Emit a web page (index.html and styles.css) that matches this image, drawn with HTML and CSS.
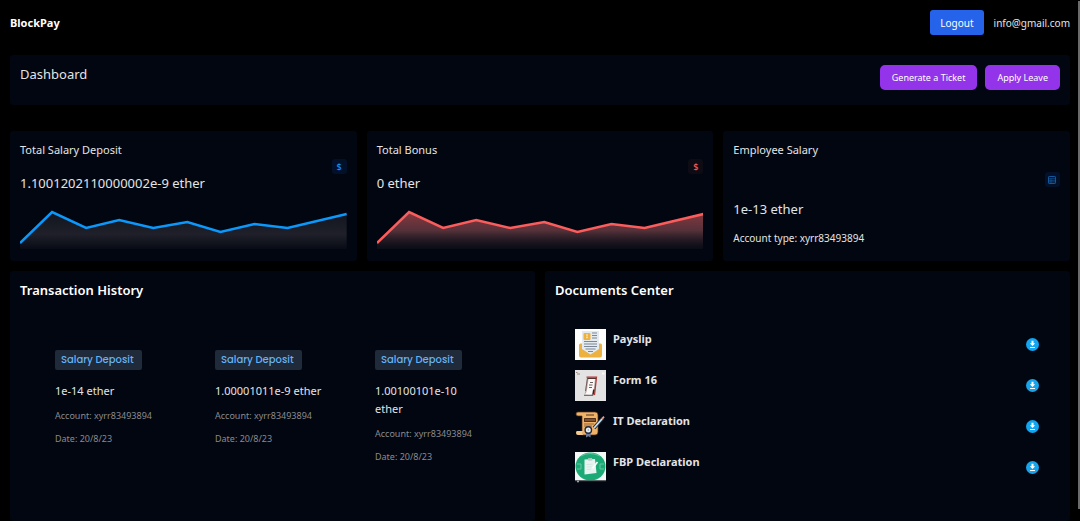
FILE: index.html
```html
<!DOCTYPE html>
<html lang="en">
<head>
  <meta charset="UTF-8">
  <meta name="viewport" content="width=device-width, initial-scale=1.0">
  <title>BlockPay</title>
  <link rel="stylesheet" href="styles.css">
</head>
<body>
  <div class="page">
    <header class="navbar">
      <h1 class="brand">BlockPay</h1>
      <div class="user">
        <button type="button" class="btn-logout">Logout</button>
        <span class="email">info@gmail.com</span>
      </div>
    </header>

    <section class="panel toolbar">
      <h2 class="toolbar-title">Dashboard</h2>
      <div class="actions">
        <button type="button" class="btn">Generate a Ticket</button>
        <button type="button" class="btn">Apply Leave</button>
      </div>
    </section>

    <section class="stats">
      <div class="panel stat">
        <h3 class="stat-title">Total Salary Deposit</h3>
        <span class="chip chip-blue">$</span>
        <p class="stat-value">1.1001202110000002e-9 ether</p>
        <svg class="chart chart-blue" viewBox="0 0 326 40" preserveAspectRatio="none">
          <defs>
            <linearGradient id="fillBlue" x1="0" y1="0" x2="0" y2="1">
              <stop offset="0" stop-color="#1b1c25" stop-opacity="0.7"/>
              <stop offset="0.6" stop-color="#1f2029"/>
              <stop offset="1" stop-color="#1f2029" stop-opacity="0.2"/>
            </linearGradient>
          </defs>
          <path fill="url(#fillBlue)" d="M0 34 32 3 66 19 99 11 133 19 167 13 200 23 234 15 267 19 326 5V40H0Z"/>
          <polyline class="chart-line" stroke-width="2.5" points="0,34 32,3 66,19 99,11 133,19 167,13 200,23 234,15 267,19 326,5"/>
        </svg>
      </div>

      <div class="panel stat">
        <h3 class="stat-title">Total Bonus</h3>
        <span class="chip chip-red">$</span>
        <p class="stat-value">0 ether</p>
        <svg class="chart chart-red" viewBox="0 0 326 40" preserveAspectRatio="none">
          <defs>
            <linearGradient id="fillRed" x1="0" y1="0" x2="0" y2="1">
              <stop offset="0" stop-color="#86383e"/>
              <stop offset="0.5" stop-color="#55313a"/>
              <stop offset="1" stop-color="#14151f" stop-opacity="0.4"/>
            </linearGradient>
          </defs>
          <path fill="url(#fillRed)" d="M0 34 32 3 66 19 99 11 133 19 167 13 200 23 234 15 267 19 326 5V40H0Z"/>
          <polyline class="chart-line" stroke-width="2.5" points="0,34 32,3 66,19 99,11 133,19 167,13 200,23 234,15 267,19 326,5"/>
        </svg>
      </div>

      <div class="panel stat stat-spaced">
        <h3 class="stat-title">Employee Salary</h3>
        <span class="chip chip-blue">
          <svg class="chip-icon" viewBox="0 0 8 8">
            <rect x="0.5" y="0.5" width="7" height="7" rx="0.6" fill="none" stroke="#11599c"/>
            <path d="M1 2.7h6M1 4.3h6M1 5.9h6M3 2.5v5" fill="none" stroke="#11599c" stroke-width="0.7"/>
          </svg>
        </span>
        <p class="stat-value">1e-13 ether</p>
        <p class="stat-note">Account type: xyrr83493894</p>
      </div>
    </section>

    <section class="details">
      <div class="panel">
        <h2 class="panel-title">Transaction History</h2>
        <div class="transactions">
          <div class="transaction">
            <span class="tag">Salary Deposit</span>
            <p class="amount">1e-14 ether</p>
            <p class="meta">Account: xyrr83493894</p>
            <p class="meta">Date: 20/8/23</p>
          </div>
          <div class="transaction">
            <span class="tag">Salary Deposit</span>
            <p class="amount">1.00001011e-9 ether</p>
            <p class="meta">Account: xyrr83493894</p>
            <p class="meta">Date: 20/8/23</p>
          </div>
          <div class="transaction">
            <span class="tag">Salary Deposit</span>
            <p class="amount">1.00100101e-10 ether</p>
            <p class="meta">Account: xyrr83493894</p>
            <p class="meta">Date: 20/8/23</p>
          </div>
        </div>
      </div>

      <div class="panel">
        <h2 class="panel-title">Documents Center</h2>
        <ul class="documents">
          <li class="document">
            <svg class="thumb" viewBox="0 0 31 31">
              <rect width="31" height="31" fill="#fdfdfb"/>
              <path d="M4 16q0-1.500 1.500-1.500H8V9h14v5.500h3.500Q27 14.500 27 16v10.500q0 2-2 2H6q-2 0-2-2Z" fill="#edb140"/>
              <path d="M7 2h17v18l-8.500 5.500L7 20Z" fill="#e3ebf1"/>
              <rect x="8.500" y="4" width="7" height="7" rx="1" fill="#edb140"/>
              <path d="M12 5v4.500M11 6h2M11 8.500h2" stroke="#fbe3b0" stroke-width="0.800"/>
              <path d="M17 4h5M17 6.500h5M17 9h5M9 12.500h13M9 15h13M9 17.500h13M10.500 20h10M13 22.500h5" stroke="#7b8794" stroke-width="1"/>
            </svg>
            <h3 class="doc-name">Payslip</h3>
            <button type="button" class="download" aria-label="Download Payslip">
              <svg viewBox="0 0 13 13"><circle cx="6.500" cy="6.500" r="6.500" fill="#14a5ee"/><path d="M5.500 2.800h2v2.500h1.700L6.500 8 3.800 5.300h1.700ZM4 9h5v1H4Z" fill="#fff"/></svg>
            </button>
          </li>
          <li class="document">
            <svg class="thumb" viewBox="0 0 31 31">
              <rect width="31" height="31" fill="#e3e3e4"/>
              <path d="M1 2.500h1.500M2 4h3" stroke="#9c8a80" stroke-width="1"/>
              <path d="M27 3.500h2.500" stroke="#f8f8f8" stroke-width="2"/>
              <path d="M12 7h9.500L19.500 25.500h-10Z" fill="#b9aaa6"/>
              <path d="M11.500 7.200h10L19.500 25" fill="none" stroke="#b03b36" stroke-width="1.300"/>
              <path d="M12.500 8.500h8.500" stroke="#543431" stroke-width="1"/>
              <path d="M12.500 8 10.500 21" stroke="#5f4a47" stroke-width="0.800"/>
              <path d="M13.500 9h6.500l-1.500 12q-.5 4-3.500 4l-5.500-.5q2-1 2.500-5Z" fill="#faf9f8"/>
              <path d="M9 25.300h9M15 12.500h3M14 15h3.500M14 17.500h3" stroke="#5a4b49" stroke-width="0.900"/>
              <path d="M18.800 19.500l-.8 5" stroke="#2b2627" stroke-width="1.500"/>
            </svg>
            <h3 class="doc-name">Form 16</h3>
            <button type="button" class="download" aria-label="Download Form 16">
              <svg viewBox="0 0 13 13"><circle cx="6.500" cy="6.500" r="6.500" fill="#14a5ee"/><path d="M5.500 2.800h2v2.500h1.700L6.500 8 3.800 5.300h1.700ZM4 9h5v1H4Z" fill="#fff"/></svg>
            </button>
          </li>
          <li class="document">
            <svg class="thumb" viewBox="0 0 31 31">
              <path d="M3 1h17q3 0 3 3v17q0 3-3 3H7V5H3Q1 5 1 3t2-2Z" fill="#f0b267" stroke="#51311f" stroke-width="0.700"/>
              <path d="M2 20h6q-1 2 0 4H3q-2 0-2-2t1-2Z" fill="#f6c98c"/>
              <path d="M11 4h8" stroke="#51311f" stroke-width="1"/>
              <rect x="9" y="7" width="12" height="4" rx="0.500" fill="#51311f"/>
              <path d="M10 9h10" stroke="#c38547" stroke-width="0.800"/>
              <path d="M9 13h10M9 15h8" stroke="#8b5933" stroke-width="0.900"/>
              <path d="M11 20v6.500l2.300-1.200 2.300 1.200V20Z" fill="#6d7896"/>
              <circle cx="13.300" cy="19" r="3.200" fill="#e9eef3" stroke="#252b3b" stroke-width="1.400"/>
              <circle cx="13.300" cy="19" r="0.800" fill="#8d97a8"/>
              <path d="M19 17 28 7" stroke="#252b3b" stroke-width="3.400"/>
              <path d="M19 17 27 8" stroke="#c5e1f2" stroke-width="1.800"/>
              <path d="m27 8 2-2.300" stroke="#e9a184" stroke-width="1.800"/>
            </svg>
            <h3 class="doc-name">IT Declaration</h3>
            <button type="button" class="download" aria-label="Download IT Declaration">
              <svg viewBox="0 0 13 13"><circle cx="6.500" cy="6.500" r="6.500" fill="#14a5ee"/><path d="M5.500 2.800h2v2.500h1.700L6.500 8 3.800 5.300h1.700ZM4 9h5v1H4Z" fill="#fff"/></svg>
            </button>
          </li>
          <li class="document">
            <svg class="thumb" viewBox="0 0 31 31">
              <rect width="31" height="28.500" fill="#f4f8f6"/>
              <ellipse cx="15.500" cy="14.500" rx="15" ry="14" fill="#1baa75"/>
              <path d="M6 4q9-5 19 0M2 12h4v5H2M29 12h-4v5h4" fill="none" stroke="#79ccb0" stroke-width="0.800"/>
              <path d="m9.500 7.500 10.500-.5 1.500 14-12 1.500Z" fill="#e8f3f1"/>
              <path d="m13 6.200 4-.2.300 2.500-4 .2Z" fill="#b4cecb"/>
              <path d="m11.500 12.500 6-.3M11.700 15l5-.3M12 17.500l4-.3" stroke="#c8e1da" stroke-width="0.700"/>
              <path d="m17.500 16.500 5-6.500" stroke="#f8fffd" stroke-width="1.600"/>
              <path d="M0 29h31" stroke="#31383c" stroke-width="0.800"/>
              <circle cx="3" cy="29.500" r="1" fill="#a9aeb0"/>
            </svg>
            <h3 class="doc-name">FBP Declaration</h3>
            <button type="button" class="download" aria-label="Download FBP Declaration">
              <svg viewBox="0 0 13 13"><circle cx="6.500" cy="6.500" r="6.500" fill="#14a5ee"/><path d="M5.500 2.800h2v2.500h1.700L6.500 8 3.800 5.300h1.700ZM4 9h5v1H4Z" fill="#fff"/></svg>
            </button>
          </li>
        </ul>
      </div>
    </section>
  </div>
</body>
</html>
```

FILE: styles.css
```css
* {
  box-sizing: border-box;
  margin: 0;
  padding: 0;
}
body {
  background-color: #000;
  font-family: "Noto Sans", sans-serif;
  font-size: 11px;
  color: #e2e4e6;
}
/* thin scroll indicator on the right edge */
body::after {
  content: "";
  position: fixed;
  top: 1px;
  right: 0;
  bottom: 12px;
  width: 2px;
  background-color: #6b6b6b;
}
button {
  border: none;
  font-family: inherit;
  color: #fff;
  cursor: pointer;
}
.page {
  display: flex;
  flex-direction: column;
  min-height: 100vh;
  padding: 10px 10px 0;
}
.panel {
  padding: 10px;
  border-radius: 3px;
  background-color: #020610;
}
.navbar {
  display: flex;
  justify-content: space-between;
  align-items: center;
  margin-bottom: 20px;
}
.brand {
  font-size: 11px;
  font-weight: 700;
  color: #fff;
}
.user {
  display: flex;
  align-items: center;
  gap: 10px;
}
.btn-logout {
  height: 25px;
  padding: 0 10px;
  border-radius: 3px;
  background-color: #2563eb;
  font-size: 10px;
}
.email {
  font-size: 10px;
}
.toolbar {
  display: flex;
  justify-content: space-between;
  align-items: flex-start;
  min-height: 50px;
  margin-bottom: 26px;
}
.toolbar-title {
  font-size: 13px;
  font-weight: 400;
  line-height: 18px;
}
.actions {
  display: flex;
  gap: 8px;
}
.btn {
  height: 25px;
  padding: 0 12px;
  border-radius: 5px;
  background-color: #9333ea;
  font-size: 9px;
}
.stats {
  display: grid;
  grid-template-columns: repeat(3, 1fr);
  gap: 10px;
  margin-bottom: 10px;
}
.stat {
  display: flex;
  flex-direction: column;
}
.stat-spaced {
  gap: 13px;
}
.stat-title {
  font-size: 11px;
  font-weight: 400;
  line-height: 18px;
}
.stat-value {
  font-size: 13px;
  line-height: 18px;
}
.stat-note {
  font-size: 10px;
  line-height: 14px;
}
.chip {
  display: flex;
  justify-content: center;
  align-items: center;
  align-self: flex-end;
  width: 15px;
  height: 15px;
  border-radius: 3px;
  font-size: 9px;
  font-weight: 500;
}
.chip-blue {
  background-color: #031029;
  color: #1492f0;
}
.chip-red {
  background-color: #0d0c15;
  color: #f55a58;
}
.chip-icon {
  width: 8px;
  height: 8px;
}
.chart {
  width: 100%;
  height: 40px;
  margin: 17px 0 2px;
}
.chart-line {
  fill: none;
  vector-effect: non-scaling-stroke;
}
.chart-blue .chart-line {
  stroke: #0c97fb;
}
.chart-red .chart-line {
  stroke: #fb5c5c;
}
.details {
  display: grid;
  grid-template-columns: repeat(2, 1fr);
  gap: 10px;
  flex: 1;
}
.panel-title {
  font-size: 13px;
  font-weight: 600;
  line-height: 18px;
  color: #fff;
}
.transactions {
  display: grid;
  grid-template-columns: repeat(3, 1fr);
  gap: 50px;
  padding: 51px 40px 0 35px;
}
.tag {
  display: inline-block;
  padding: 0 8px 0 6px;
  margin-bottom: 12px;
  border-radius: 2px;
  background-color: #1f2a3a;
  color: #68b3f3;
  font-family: Poppins, Inter, sans-serif;
  font-size: 10px;
  font-weight: 500;
  line-height: 20px;
  white-space: nowrap;
}
.amount {
  font-size: 11px;
  line-height: 18px;
  margin-bottom: 8px;
}
.meta {
  font-size: 9px;
  line-height: 15px;
  margin-bottom: 8px;
  color: #888b92;
  white-space: nowrap;
}
.documents {
  display: flex;
  flex-direction: column;
  gap: 10px;
  padding: 30px 20px 0;
  list-style: none;
}
.document {
  display: flex;
  align-items: flex-start;
  gap: 7px;
}
.thumb {
  width: 31px;
  height: 31px;
}
.doc-name {
  flex: 1;
  font-size: 11px;
  font-weight: 700;
  line-height: 20px;
}
.download {
  align-self: center;
  width: 13px;
  height: 13px;
  margin-right: 1px;
  border-radius: 50%;
  background: none;
}
.download svg {
  display: block;
}
```
